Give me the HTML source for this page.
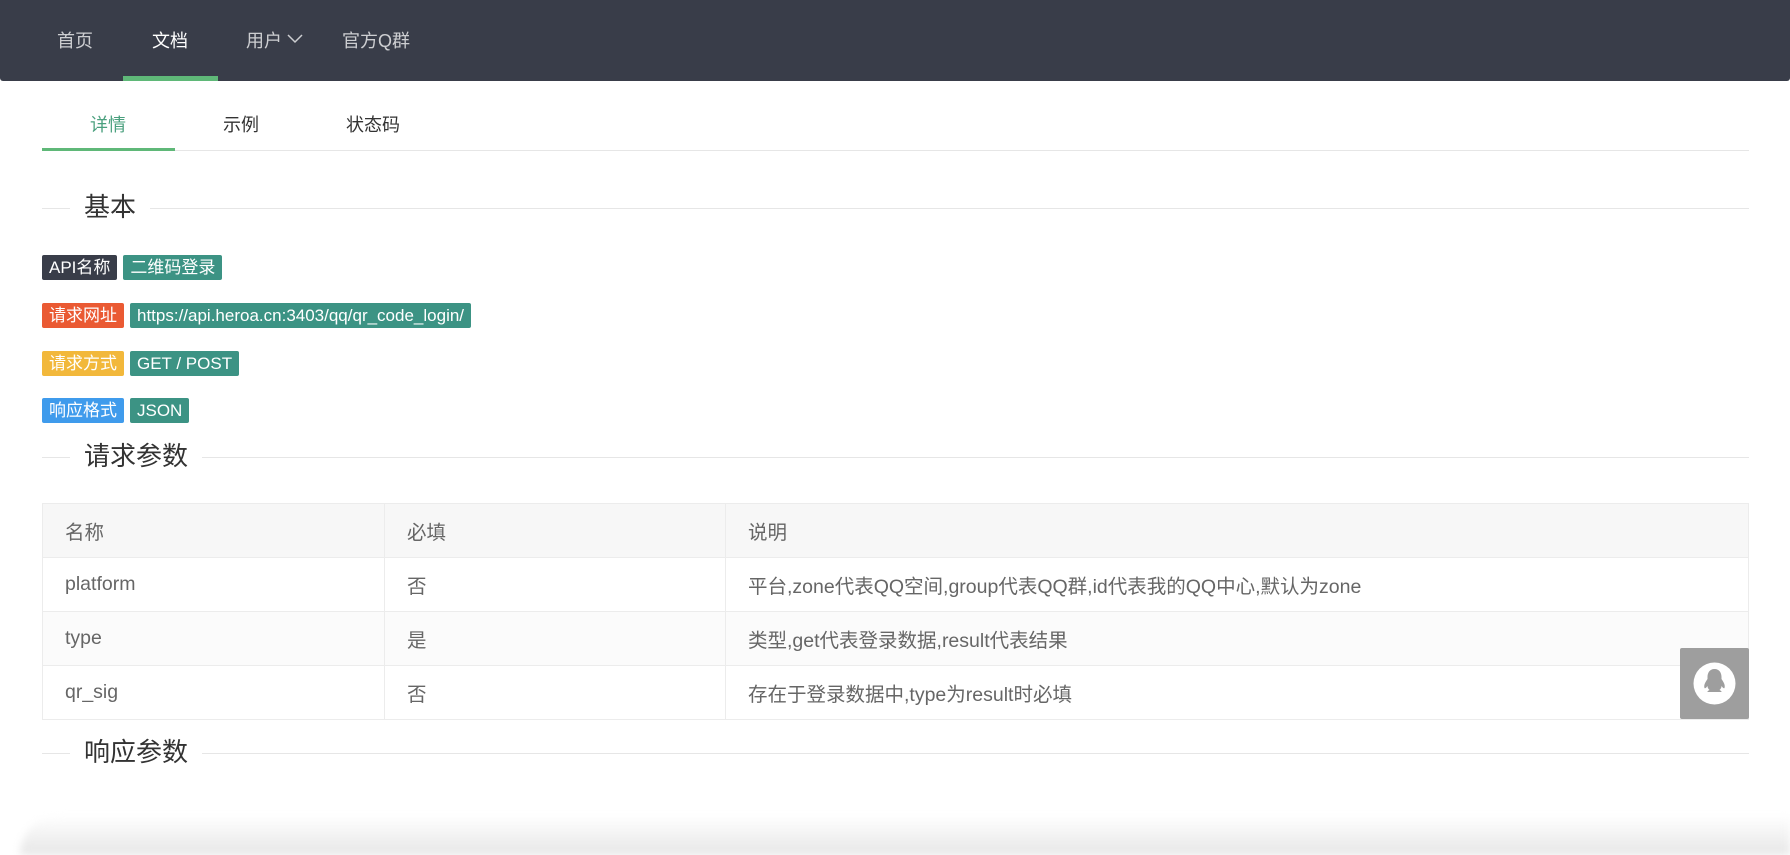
<!DOCTYPE html>
<html><head><meta charset="utf-8"><style>
*{margin:0;padding:0;box-sizing:border-box}
body{width:1790px;height:855px;overflow:hidden;background:#fff;font-family:"Liberation Sans","Noto Sans CJK SC",sans-serif;position:relative}
.nav{position:absolute;left:0;top:0;width:1790px;height:81px;background:#393d49;border-radius:0 0 3px 3px}
.nav span{position:absolute;top:27px;font-size:18px;color:rgba(255,255,255,.75)}
.nav .act{color:#fff}
.bar{position:absolute;left:123px;top:76px;width:95px;height:5px;background:#5fb878}
.tabs span{position:absolute;top:111px;font-size:18px;color:#333}
.tabline{position:absolute;left:42px;top:150px;width:1707px;height:1px;background:#e6e6e6}
.tabact{position:absolute;left:42px;top:148px;width:133px;height:3px;background:#5fb878}
.sec{position:absolute;left:42px;width:1707px;height:1px;background:#e6e6e6}
.sec b{position:absolute;left:28px;top:-16px;background:#fff;padding:0 14px;font-weight:normal;font-size:26px;color:#333;line-height:30px}
.row{position:absolute;left:42px;display:flex;gap:6px}
.badge{height:25px;line-height:25px;padding:0 7px;font-size:17px;color:#fff;border-radius:2px;white-space:nowrap}
.dk{background:#393d49}.tl{background:#3c9384}.rd{background:#ea5a33}.yl{background:#f2b83b}.bl{background:#3f9bec}
table{position:absolute;left:42px;top:503px;width:1707px;border-collapse:collapse;font-size:19.5px;color:#666}
td{height:54px;border:1px solid #ececec;padding-left:22px}
tr:first-child td{background:#f7f7f7}
tr.g td{background:#fbfbfb}
.qq{position:absolute;left:1680px;top:648px;width:69px;height:71px;background:#9e9e9e;border-radius:2px}
.shadow{position:absolute;left:20px;top:815px;width:1770px;height:40px;background:linear-gradient(#fff,#e6e6e6);border-radius:60px 0 0 0;filter:blur(4px)}
</style></head><body>
<div class="nav">
<span style="left:57px">首页</span>
<span class="act" style="left:152px">文档</span>
<span style="left:246px">用户 <svg width="16" height="10" viewBox="0 0 16 10" style="vertical-align:3px"><path d="M1 1l7 7 7-7" fill="none" stroke="rgba(255,255,255,.75)" stroke-width="1.5"/></svg></span>
<span style="left:342px">官方Q群</span>
<div class="bar"></div>
</div>
<div class="tabs">
<span style="left:90px;color:#4aa07e">详情</span>
<span style="left:223px">示例</span>
<span style="left:346px">状态码</span>
</div>
<div class="tabline"></div><div class="tabact"></div>
<div class="sec" style="top:208px"><b>基本</b></div>
<div class="row" style="top:255px"><div class="badge dk">API名称</div><div class="badge tl">二维码登录</div></div>
<div class="row" style="top:303px"><div class="badge rd">请求网址</div><div class="badge tl">https://api.heroa.cn:3403/qq/qr_code_login/</div></div>
<div class="row" style="top:351px"><div class="badge yl">请求方式</div><div class="badge tl">GET / POST</div></div>
<div class="row" style="top:398px"><div class="badge bl">响应格式</div><div class="badge tl">JSON</div></div>
<div class="sec" style="top:457px"><b>请求参数</b></div>
<table>
<tr><td style="width:342px">名称</td><td style="width:341px">必填</td><td>说明</td></tr>
<tr><td>platform</td><td>否</td><td>平台,zone代表QQ空间,group代表QQ群,id代表我的QQ中心,默认为zone</td></tr>
<tr class="g"><td>type</td><td>是</td><td>类型,get代表登录数据,result代表结果</td></tr>
<tr><td>qr_sig</td><td>否</td><td>存在于登录数据中,type为result时必填</td></tr>
</table>
<div class="sec" style="top:753px"><b>响应参数</b></div>
<div class="qq"><svg width="69" height="71" viewBox="0 0 69 71"><circle cx="34.5" cy="35.5" r="21" fill="#fff"/><path d="M34.5 21c-5 0-7 4-7 8v2c-2 3-4 6-3 9 1 1 2-1 3-2 0 2 1 3 2 4-2 1-3 2-1 2h12c2 0 1-1-1-2 1-1 2-2 2-4 1 1 2 3 3 2 1-3-1-6-3-9v-2c0-4-2-8-7-8z" fill="#9e9e9e"/></svg></div>
<div class="shadow"></div>
</body></html>
